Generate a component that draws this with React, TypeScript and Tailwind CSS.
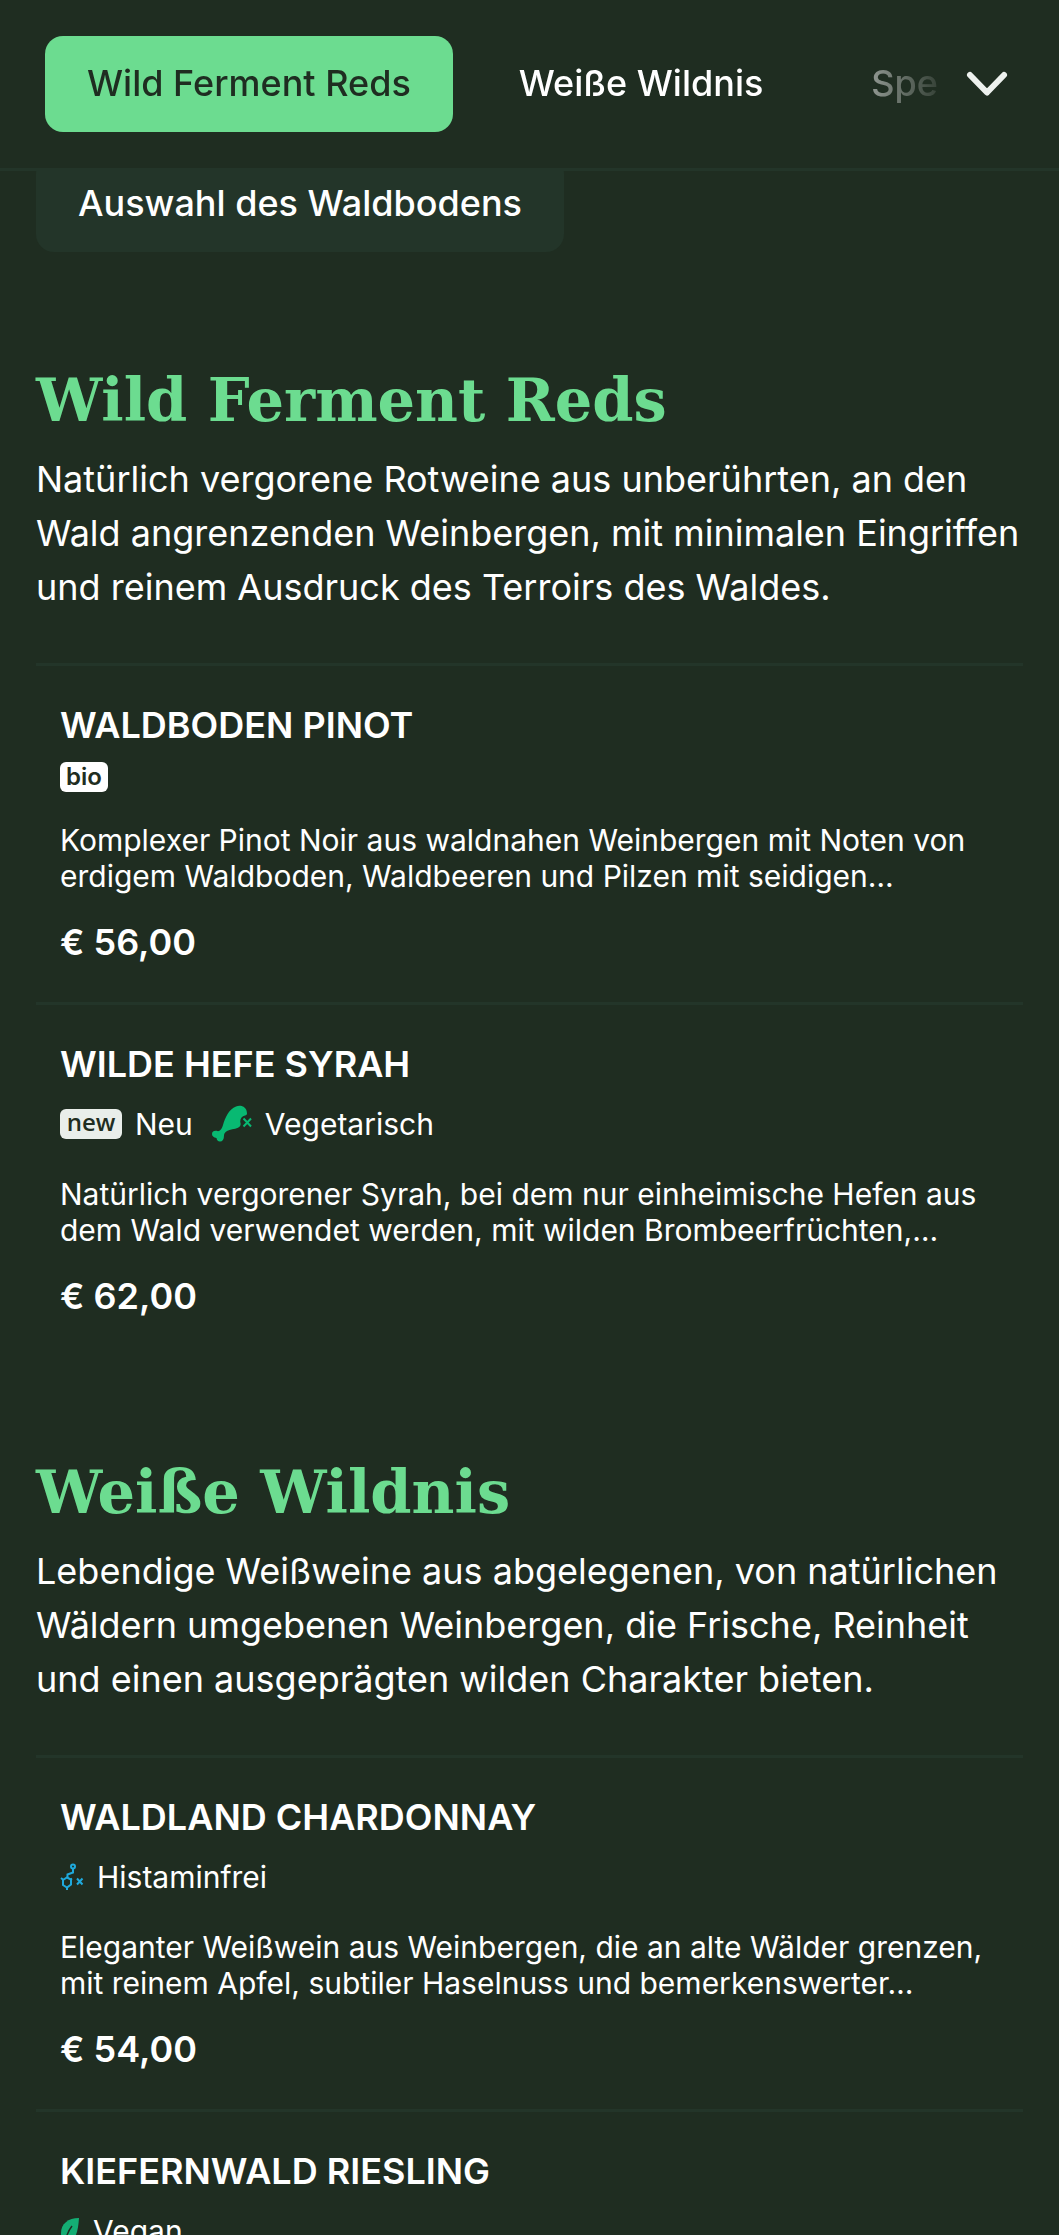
import type { ReactNode } from "react";

type Tag = { label: string; icon: ReactNode; hideLabel?: boolean };
type Wine = { name: string; tags: Tag[]; text: string; price: string };
type Category = { title: string; text: string; wines: Wine[] };

function BioIcon() {
    return (
        <span className="flex h-[30px] w-12 items-center justify-center rounded-md bg-white text-[24px] leading-6 font-semibold text-[#1f2d21]">
            bio
        </span>
    );
}

function NewIcon() {
    return (
        <span className="flex h-[30px] w-[62px] items-center justify-center rounded-md bg-[#e9eeea] pb-1 font-['Open_Sans',sans-serif] text-[24px] leading-6 font-semibold text-[#1f2d21]">
            new
        </span>
    );
}

function DrumstickIcon() {
    return (
        <svg viewBox="0 0 40 38" className="h-[38px] w-10" aria-hidden="true">
            <path
                d="M24 1.500C29-.5 35 2 35 8.500c0 1.200-.6 1.800-2 2-3.500.8-5.500 4-4.500 7.500.5 2-.5 3.800-2.500 4.700-3.500 1.600-8 1.300-11 3.300-2 1.300-3 2.500-3 4.500 0 4-1.500 6-4 6-2.200 0-3.200-1.500-3.500-3.500C1.500 32.500 0 31 0 29c0-3 3-4 6-2.800 3-.7 4-3 5-6.200C13 13 17 4 24 1.500z"
                fill="#08b972"
            />
            <path d="M31.500 13.500l7.500 8M39 13.500l-7.500 8" stroke="#08b972" strokeWidth="2" fill="none" />
        </svg>
    );
}

function MoleculeIcon() {
    return (
        <svg viewBox="0 0 24 28" className="h-7 w-6" fill="none" stroke="#1fa9dc" strokeWidth="2" aria-hidden="true">
            <circle cx="13" cy="3.500" r="2" />
            <path d="M13 5.500v4l-5.500 2v3" />
            <path d="M7 14.500l4 2v5l-4 3-4-2.500v-5z" />
            <path d="M1 15l2.500 2M7 24v3M10.500 16.500l1.500-1" />
            <path d="M17 15.500l5.500 6M22.500 15.500l-5.500 6" />
        </svg>
    );
}

function LeafIcon() {
    return (
        <svg viewBox="0 0 20 28" className="h-7 w-5" aria-hidden="true">
            <path d="M19 1C8 1 1 7 1 16c0 4 1 7 3 9h5c7-3 9-10 10-24z" fill="#14ae74" />
            <path d="M12 9C8 14 6 19 5 27" stroke="#1f2d21" strokeWidth="1.500" fill="none" />
        </svg>
    );
}

const categories: Category[] = [
    {
        title: "Wild Ferment Reds",
        text: "Natürlich vergorene Rotweine aus unberührten, an den Wald angrenzenden Weinbergen, mit minimalen Eingriffen und reinem Ausdruck des Terroirs des Waldes.",
        wines: [
            {
                name: "Waldboden Pinot",
                tags: [{ label: "Bio", icon: <BioIcon />, hideLabel: true }],
                text: "Komplexer Pinot Noir aus waldnahen Weinbergen mit Noten von erdigem Waldboden, Waldbeeren und Pilzen mit seidigen…",
                price: "€ 56,00",
            },
            {
                name: "Wilde Hefe Syrah",
                tags: [
                    { label: "Neu", icon: <NewIcon /> },
                    { label: "Vegetarisch", icon: <DrumstickIcon /> },
                ],
                text: "Natürlich vergorener Syrah, bei dem nur einheimische Hefen aus dem Wald verwendet werden, mit wilden Brombeerfrüchten,…",
                price: "€ 62,00",
            },
        ],
    },
    {
        title: "Weiße Wildnis",
        text: "Lebendige Weißweine aus abgelegenen, von natürlichen Wäldern umgebenen Weinbergen, die Frische, Reinheit und einen ausgeprägten wilden Charakter bieten.",
        wines: [
            {
                name: "Waldland Chardonnay",
                tags: [{ label: "Histaminfrei", icon: <MoleculeIcon /> }],
                text: "Eleganter Weißwein aus Weinbergen, die an alte Wälder grenzen, mit reinem Apfel, subtiler Haselnuss und bemerkenswerter…",
                price: "€ 54,00",
            },
            {
                name: "Kiefernwald Riesling",
                tags: [{ label: "Vegan", icon: <LeafIcon /> }],
                text: "",
                price: "",
            },
        ],
    },
];

function WineItem({ wine }: { wine: Wine }) {
    const iconOnly = wine.tags.every((tag) => tag.hideLabel);

    return (
        <li className="border-t-3 border-[#233529] px-6 pt-[35px] pb-9">
            <h3 className="text-[36px] leading-[48px] font-semibold uppercase">{wine.name}</h3>
            <ul className={iconOnly ? "mt-[13px] flex" : "mt-[13px] flex h-[45px] items-center gap-[19px]"}>
                {wine.tags.map((tag) => (
                    <li key={tag.label} className="flex items-center gap-[13px] text-[30px] leading-9">
                        {tag.icon}
                        {!tag.hideLabel && <span>{tag.label}</span>}
                    </li>
                ))}
            </ul>
            <p className="mt-[30px] text-[30px] leading-9">{wine.text}</p>
            <p className="mt-6 text-[36px] leading-[48px] font-semibold">{wine.price}</p>
        </li>
    );
}

export default function App() {
    return (
        <div className="flex h-screen flex-col overflow-hidden bg-[#1f2d21] font-[Inter,sans-serif] text-white">
            <header className="flex shrink-0 items-start border-b-3 border-[#233529] pt-9 pr-6 pb-9 pl-[45px]">
                <nav className="flex min-w-0 flex-1 gap-6 overflow-hidden mask-r-from-[calc(100%-150px)] mask-r-to-[calc(100%+16px)]">
                    <button className="h-24 shrink-0 rounded-[18px] bg-[#6cdc90] px-[42px] pb-0.5 text-[36px] font-medium text-[#1f2d21]">Wild Ferment Reds</button>
                    <button className="h-24 shrink-0 rounded-[18px] px-[42px] pb-0.5 text-[36px] font-medium">Weiße Wildnis</button>
                    <button className="h-24 shrink-0 rounded-[18px] px-[42px] pb-0.5 text-[36px] font-medium">Spe</button>
                </nav>
                <button aria-label="Alle Kategorien" className="flex h-24 w-24 shrink-0 items-center justify-center">
                    <svg viewBox="0 0 42 26" className="h-[26px] w-[42px]" fill="none" stroke="#edf1ee" strokeWidth="6" strokeLinecap="round" strokeLinejoin="round">
                        <path d="M4 4l17 17.500L38 4" />
                    </svg>
                </button>
            </header>

            <main className="min-h-0 flex-1 overflow-hidden px-9">
                <div className="mb-3 flex h-[81px] items-end overflow-hidden">
                    <button className="h-24 shrink-0 rounded-[18px] bg-[#233529] px-[42px] pb-0.5 text-[36px] font-medium">Auswahl des Waldbodens</button>
                </div>

                {categories.map((category) => (
                    <section key={category.title} className="pt-[93px]">
                        <h2 className="font-['DejaVu_Serif',serif] text-[59px] leading-[88px] font-bold text-[#6cdc90]">{category.title}</h2>
                        <p className="mt-[7px] mb-[49px] text-[36px] leading-[54px]">{category.text}</p>
                        <ul>
                            {category.wines.map((wine) => (
                                <WineItem key={wine.name} wine={wine} />
                            ))}
                        </ul>
                    </section>
                ))}
            </main>
        </div>
    );
}
